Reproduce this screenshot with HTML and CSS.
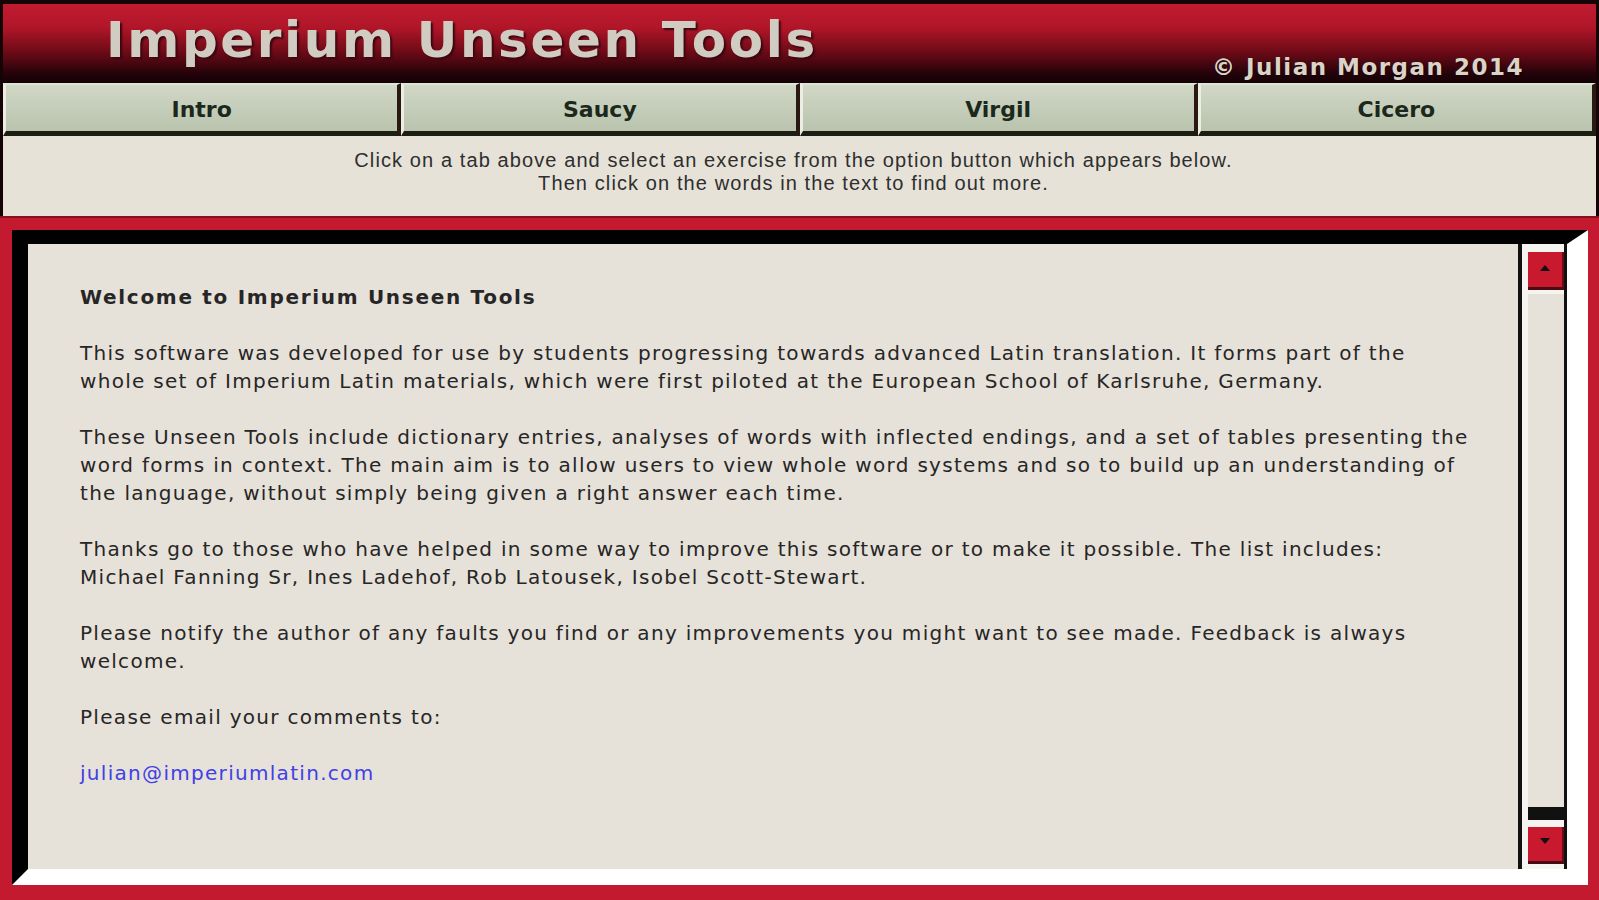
FILE: index.html
```html
<!DOCTYPE html>
<html lang="en">
<head>
  <meta charset="UTF-8">
  <title>Imperium Unseen Tools</title>
  <link rel="stylesheet" href="styles.css">
</head>
<body>
  <div class="top">
    <header class="banner">
      <h1>Imperium Unseen Tools</h1>
      <span class="copy">© Julian Morgan 2014</span>
    </header>

    <nav class="tabs">
      <button class="tab">Intro</button>
      <button class="tab">Saucy</button>
      <button class="tab">Virgil</button>
      <button class="tab">Cicero</button>
    </nav>

    <div class="hint">
      Click on a tab above and select an exercise from the option button which appears below.<br>
      Then click on the words in the text to find out more.
    </div>
  </div>

  <div class="stage">
    <div class="frame">
      <div class="content">
        <h3>Welcome to Imperium Unseen Tools</h3>
        <p>This software was developed for use by students progressing towards advanced Latin translation. It forms part of the<br>
          whole set of Imperium Latin materials, which were first piloted at the European School of Karlsruhe, Germany.</p>
        <p>These Unseen Tools include dictionary entries, analyses of words with inflected endings, and a set of tables presenting the<br>
          word forms in context. The main aim is to allow users to view whole word systems and so to build up an understanding of<br>
          the language, without simply being given a right answer each time.</p>
        <p>Thanks go to those who have helped in some way to improve this software or to make it possible. The list includes:<br>
          Michael Fanning Sr, Ines Ladehof, Rob Latousek, Isobel Scott-Stewart.</p>
        <p>Please notify the author of any faults you find or any improvements you might want to see made. Feedback is always<br>
          welcome.</p>
        <p>Please email your comments to:</p>
        <p><a href="mailto:julian@imperiumlatin.com">julian@imperiumlatin.com</a></p>
      </div>

      <!-- old style scroll bar -->
      <div class="scroll">
        <div class="rail">
          <div class="arrow up"></div>
          <div class="track"></div>
          <div class="arrow down"></div>
        </div>
      </div>
    </div>
  </div>
</body>
</html>
```

FILE: styles.css
```css
body {
  margin: 0;
  height: 900px;
  overflow: hidden;
  background-color: #c41a30;
  font-family: "DejaVu Sans", Verdana, sans-serif;
}
.top {
  background-color: #140406;
  padding: 4px 3px 0;
}
.banner {
  height: 79px;
  display: flex;
  justify-content: space-between;
  align-items: flex-start;
  padding: 0 72px 0 103px;
  background: linear-gradient(to bottom, #c21b30 0%, #b01628 30%, #6a0a16 62%, #24030a 88%, #120206 100%);
}
.banner h1 {
  margin: 11px 0 0;
  font-size: 50px;
  line-height: 50px;
  letter-spacing: 2.6px;
  color: #d0ccc1;
  text-shadow: 2px 2px 2px #3a0610;
}
.copy {
  margin-top: 52px;
  font-size: 23px;
  line-height: 23px;
  font-weight: bold;
  letter-spacing: 1.5px;
  color: #d8d4c8;
  text-shadow: 1px 1px 1px #200306;
}
.tabs {
  display: grid;
  grid-template-columns: repeat(4, 1fr);
  height: 53px;
}
.tab {
  font-family: "DejaVu Sans", Verdana, sans-serif;
  font-size: 22px;
  font-weight: bold;
  color: #1b281b;
  background: linear-gradient(to bottom, #d0d8c6, #b9c3ad);
  border: none;
  border-top: 2px solid #dfe5d6;
  border-left: 3px solid #eceee4;
  border-right: 4px solid #2a1812;
  border-bottom: 5px solid #1c1e14;
  padding: 2px 0 0;
  cursor: pointer;
}
.hint {
  height: 80px;
  box-sizing: border-box;
  padding: 13px 12px 0 0;
  background-color: #e6e2d8;
  text-align: center;
  font-family: "Liberation Sans", Arial, sans-serif;
  font-size: 20px;
  line-height: 23px;
  letter-spacing: 1.1px;
  color: #2e2e2e;
}
.stage {
  height: 684px;
  box-sizing: border-box;
  padding: 12px 11px 15px 12px;
  border-top: 2px solid #8c0f1e;
}
.frame {
  display: flex;
  height: 625px;
  border-style: solid;
  border-width: 14px 21px 16px 16px;
  border-color: #000 #fff #fff #000;
}
.content {
  flex: 1;
  background-color: #e6e1d9;
  padding: 39px 20px 0 52px;
  font-size: 20px;
  line-height: 28px;
  letter-spacing: 1.3px;
  color: #262626;
  white-space: nowrap;
}
.content h3 {
  margin: 0 0 28px;
  font-size: 20px;
  letter-spacing: 1.7px;
}
.content p {
  margin: 0 0 28px;
}
.content a {
  color: #4040e6;
  text-decoration: none;
}
.scroll {
  width: 49px;
  box-sizing: border-box;
  border-left: 4px solid #111;
  padding-left: 6px;
  background-color: #f6f4f0;
}
.rail {
  display: flex;
  flex-direction: column;
  height: 100%;
  box-sizing: border-box;
  padding: 8px 0 5px;
  border-right: 3px solid #111;
}
.arrow {
  display: flex;
  justify-content: center;
  box-sizing: border-box;
  background-color: #c8192e;
  border-bottom: 3px solid #4a0a12;
  border-right: 2px solid #6a0c16;
  cursor: pointer;
}
.arrow::after {
  content: "";
  width: 0;
  height: 0;
  border-left: 5px solid transparent;
  border-right: 5px solid transparent;
}
.up {
  height: 38px;
  padding-top: 13px;
}
.up::after {
  border-bottom: 6px solid #111;
}
.down {
  height: 37px;
  padding-top: 11px;
}
.down::after {
  border-top: 6px solid #111;
}
.track {
  flex: 1;
  background-color: #e6e1d9;
  border-top: 4px solid #f6f4f0;
  border-bottom: 13px solid #111;
  margin-bottom: 7px;
}
```
